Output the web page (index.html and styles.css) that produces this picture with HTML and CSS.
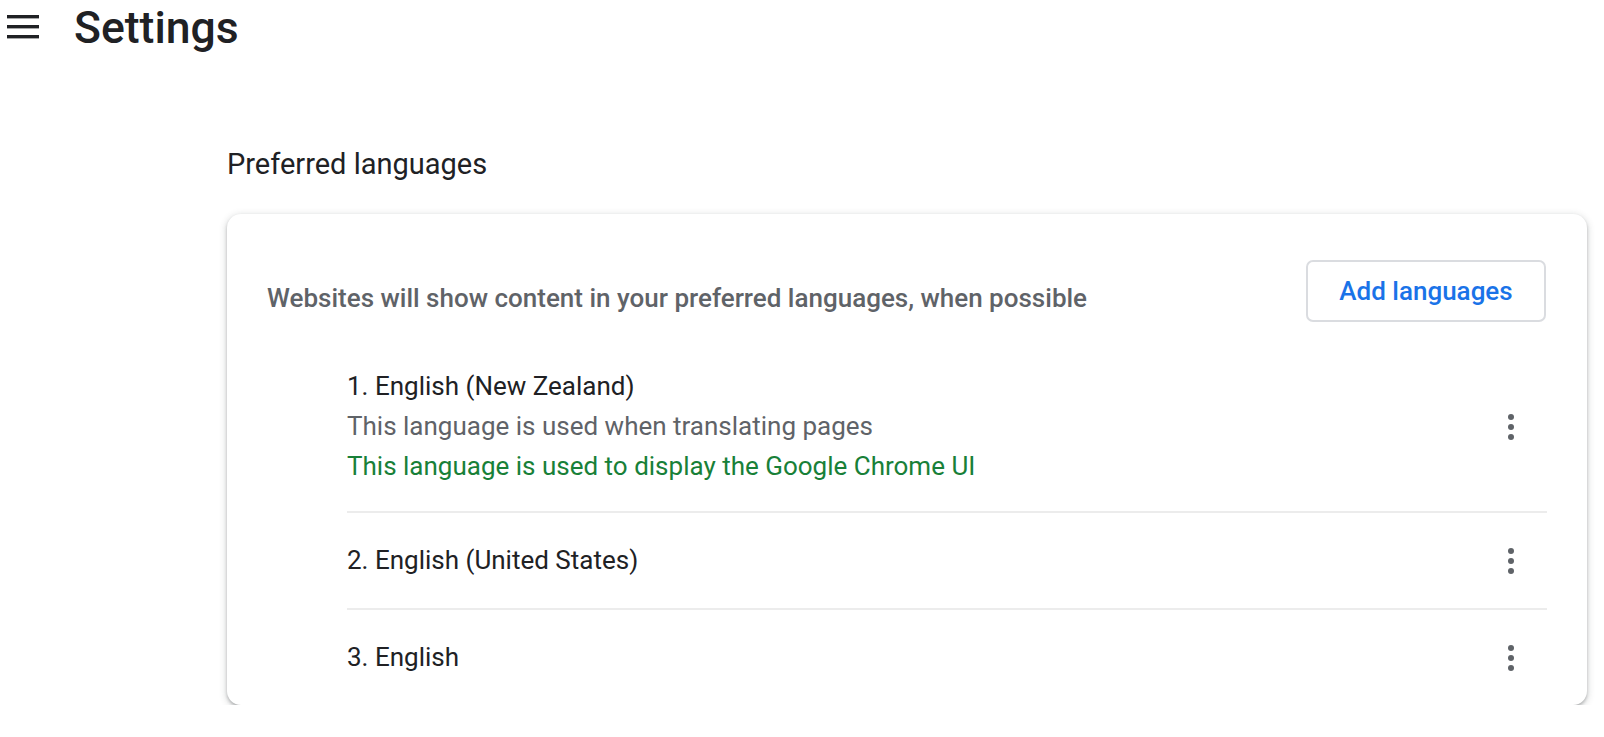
FILE: index.html
```html
<!DOCTYPE html>
<html lang="en">
<head>
  <meta charset="UTF-8" />
  <title>Settings - Languages</title>
  <link rel="stylesheet" href="styles.css">
</head>
<body>
  <header class="toolbar">
    <button class="menu-btn" aria-label="Main menu">
      <svg width="32" height="24" viewBox="0 0 32 24">
        <rect x="0" y="0" width="32" height="3.4" fill="#202124"/>
        <rect x="0" y="10" width="32" height="3.4" fill="#202124"/>
        <rect x="0" y="20" width="32" height="3.4" fill="#202124"/>
      </svg>
    </button>
    <h1 class="toolbar-title">Settings</h1>
  </header>

  <main class="page">
    <h2 class="section-title">Preferred languages</h2>

    <div class="card">
      <div class="card-header">
        <div class="card-header-text">Websites will show content in your preferred languages, when possible</div>
        <button class="outline-btn">Add languages</button>
      </div>

      <div class="lang-list">
        <div class="lang-row">
          <div class="lang-info">
            <div class="lang-name">1. English (New Zealand)</div>
            <div class="lang-note">This language is used when translating pages</div>
            <div class="lang-note ui">This language is used to display the Google Chrome UI</div>
          </div>
          <button class="kebab" aria-label="More actions"><span></span><span></span><span></span></button>
        </div>
        <div class="lang-row">
          <div class="lang-info">
            <div class="lang-name">2. English (United States)</div>
          </div>
          <button class="kebab" aria-label="More actions"><span></span><span></span><span></span></button>
        </div>
        <div class="lang-row">
          <div class="lang-info">
            <div class="lang-name">3. English</div>
          </div>
          <button class="kebab" aria-label="More actions"><span></span><span></span><span></span></button>
        </div>
      </div>
    </div>
  </main>
</body>
</html>
```

FILE: styles.css
```css
:root {
  --text-color: #202124;
  --secondary-text: #5f6368;
  --link-color: #1a73e8;
  --green-text: #188038;
  --separator: #ececec;
}

* {
  box-sizing: border-box;
  margin: 0;
  padding: 0;
}

body {
  font-family: Roboto, "Liberation Sans", sans-serif;
  background: #fff;
  color: var(--text-color);
}

button {
  font-family: inherit;
  background: none;
  border: none;
  cursor: pointer;
}

.toolbar {
  display: flex;
  align-items: center;
  height: 56px;
  padding-left: 7px;
}

.menu-btn {
  display: flex;
  width: 32px;
  height: 24px;
  margin-top: -2px;
}

.toolbar-title {
  margin-left: 35px;
  font-size: 44.5px;
  font-weight: 500;
  line-height: 52px;
  color: var(--text-color);
}

.page {
  padding: 0 17px 0 227px;
}

.section-title {
  margin-top: 91px;
  margin-bottom: 33px;
  font-size: 29px;
  font-weight: 400;
  line-height: 34px;
  color: var(--text-color);
}

.card {
  background: #fff;
  border-radius: 14px;
  box-shadow: 0 2px 3px 0 rgba(60, 64, 67, 0.3), 0 2px 6px 2px rgba(60, 64, 67, 0.15);
}

.card-header {
  display: flex;
  justify-content: space-between;
  align-items: center;
  padding: 46px 41px 0 40px;
}

.card-header-text {
  padding-top: 14px;
  font-size: 26px;
  font-weight: 500;
  line-height: 32px;
  color: var(--secondary-text);
}

.outline-btn {
  width: 240px;
  height: 62px;
  border: 2px solid #dadce0;
  border-radius: 7px;
  font-size: 26px;
  font-weight: 500;
  color: var(--link-color);
}

.lang-list {
  margin-top: 17px;
  padding: 0 40px 0 120px;
}

.lang-row {
  display: flex;
  align-items: center;
  justify-content: space-between;
  padding: 28px 0;
}

.lang-row:first-child {
  padding-bottom: 25px;
}

.lang-row + .lang-row {
  border-top: 2px solid var(--separator);
}

.lang-name {
  font-size: 26px;
  line-height: 39px;
}

.lang-note {
  font-size: 26px;
  line-height: 40px;
  color: var(--secondary-text);
}

.lang-note.ui {
  color: var(--green-text);
}

.kebab {
  display: flex;
  flex-direction: column;
  align-items: center;
  justify-content: center;
  gap: 4px;
  width: 48px;
  height: 39px;
  margin-right: 12px;
}

.kebab span {
  width: 6px;
  height: 6px;
  border-radius: 50%;
  background: var(--secondary-text);
}
```
